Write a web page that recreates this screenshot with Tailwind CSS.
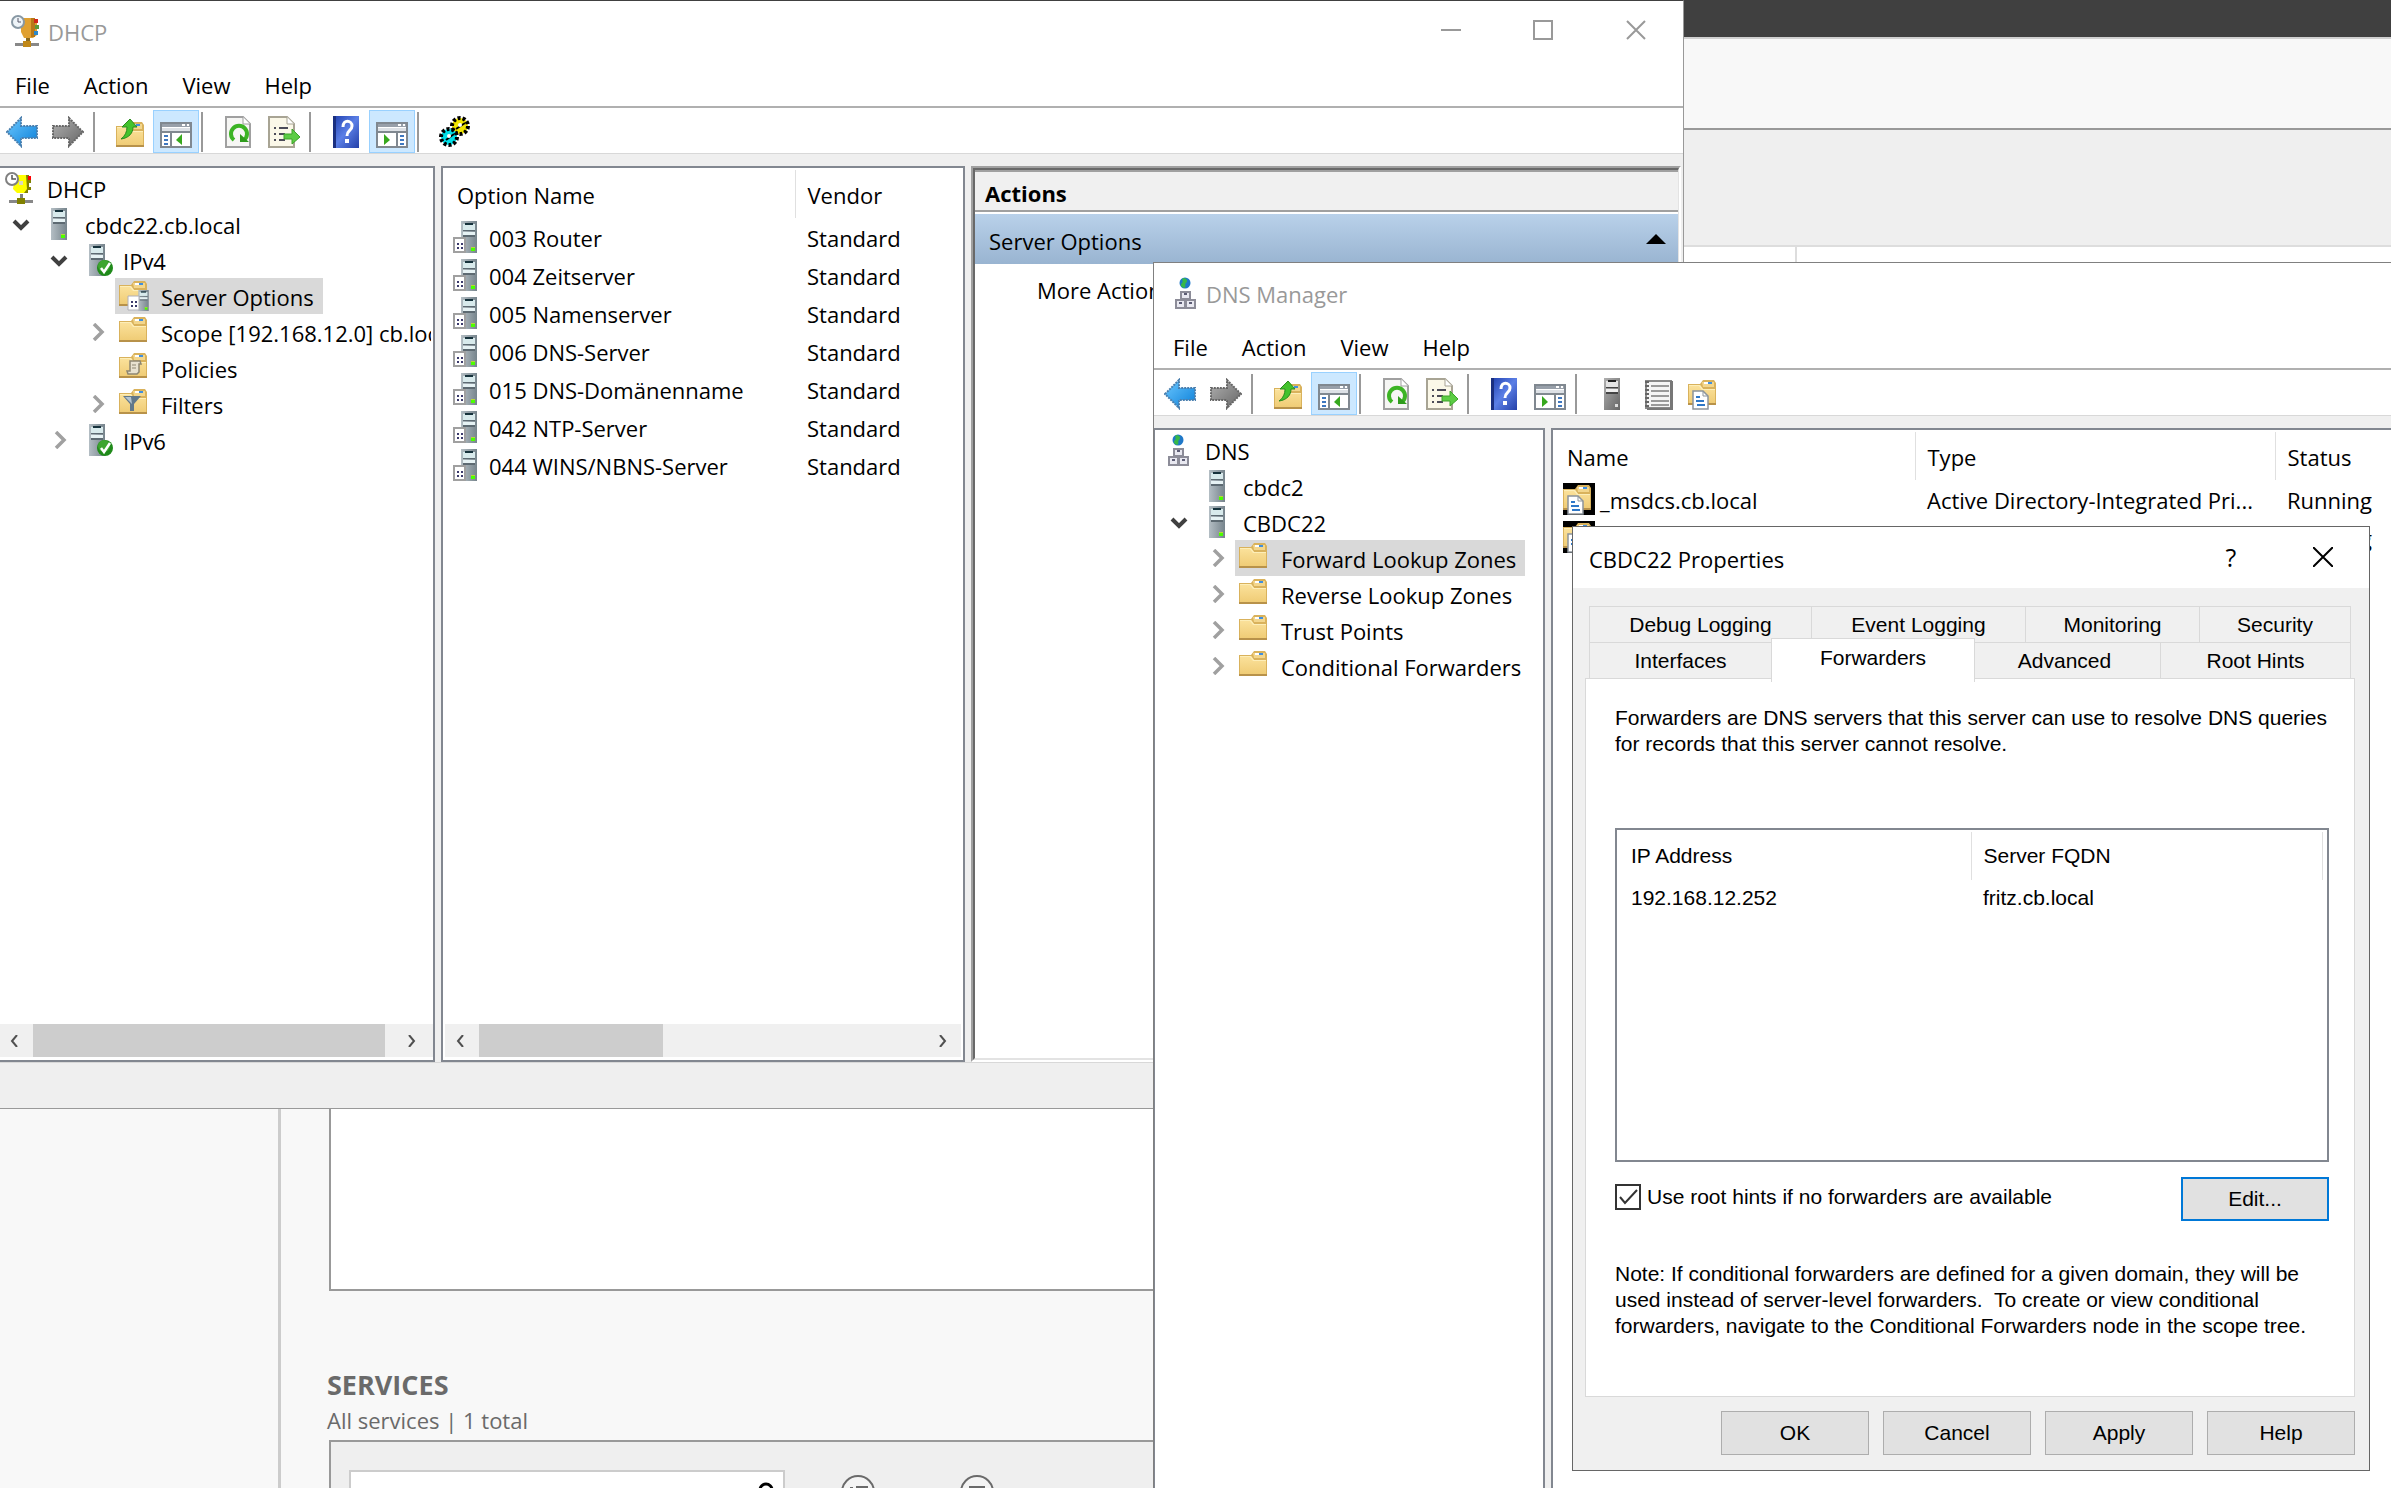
<!DOCTYPE html>
<html lang="en">
<head>
    <meta charset="UTF-8">
    <meta name="viewport" content="width=device-width, initial-scale=1.0">
    <title>DHCP / DNS Manager</title>
    <script src="https://cdn.jsdelivr.net/npm/@tailwindcss/browser@4"></script>
</head>
<body class="bg-[#f8f8f8] font-['Open_Sans','Noto_Sans',sans-serif] text-[22px] leading-9 text-black">

    <!-- Icons -->
    <svg class="absolute size-0" aria-hidden="true">
        <defs>
            <linearGradient id="gBlue" x1="0" y1="0" x2="1" y2="1"><stop offset="0" stop-color="#6cc8ff"/><stop offset="1" stop-color="#0b7fd8"/></linearGradient>
            <linearGradient id="gGray" x1="0" y1="0" x2="1" y2="1"><stop offset="0" stop-color="#b0b0b0"/><stop offset="1" stop-color="#666"/></linearGradient>
            <linearGradient id="gFolder" x1="0" y1="0" x2="0" y2="1"><stop offset="0" stop-color="#fbe29c"/><stop offset="1" stop-color="#efcb74"/></linearGradient>
            <linearGradient id="gServer" x1="0" y1="0" x2="1" y2="0"><stop offset="0" stop-color="#b4bec4"/><stop offset="1" stop-color="#76848c"/></linearGradient>
            <linearGradient id="gHelp" x1="0" y1="0" x2="1" y2="1"><stop offset="0" stop-color="#1f3fae"/><stop offset=".5" stop-color="#5b7fe6"/><stop offset="1" stop-color="#2440a8"/></linearGradient>

            <symbol id="back" viewBox="0 0 32 32"><path d="M1 16 15 2v8h16v12H15v8z" fill="url(#gBlue)" stroke="#4a7fae" stroke-width="2" stroke-dasharray="2 1"/></symbol>
            <symbol id="forward" viewBox="0 0 32 32"><path d="M31 16 17 2v8H1v12h16v8z" fill="url(#gGray)" stroke="#666" stroke-width="2" stroke-dasharray="2 1"/></symbol>
            <symbol id="folder" viewBox="0 0 32 32">
                <path d="M0 5h12l3-4h11l2 3v22H0z" fill="#d9b25c"/>
                <path d="M1 6h11l3 4h12v15H1z" fill="url(#gFolder)"/><path d="M1 6h11l3 4h12v1H14l-3-4H1z" fill="#fdeeb8"/>
                <path d="M14 3h12v5H15z" fill="#f3d68c"/><path d="M16 3h4v2h-4z" fill="#fff"/><path d="M20 3h4v2h-4z" fill="#3f8fe0"/>
                <path d="M0 24h28v2H0z" fill="#b8924a"/>
            </symbol>
            <symbol id="server" viewBox="0 0 32 32">
                <path d="M8 0h16v32H8z" fill="url(#gServer)"/><path d="M10 3h12v6H10z" fill="#d8eaec"/><path d="M12 2h8v2h-8z" fill="#16323c"/>
                <path d="M10 9h12v1H10zM10 14h12v2H10z" fill="#5d6a72"/><path d="M10 11h12v3H10z" fill="#e6f2f4"/>
                <path d="M18 26h4v4h-4z" fill="#4bff00"/><path d="M18 26h4v1h-4z" fill="#b8d838"/>
            </symbol>
            <symbol id="serverGray" viewBox="0 0 32 32">
                <path d="M8 0h16v32H8z" fill="url(#gGray)"/><path d="M10 3h12v6H10z" fill="#e4e4e4"/><path d="M12 2h8v2h-8z" fill="#222"/>
                <path d="M10 9h12v1H10zM10 14h12v2H10z" fill="#444"/><path d="M10 11h12v3H10z" fill="#eee"/><path d="M19 26h3v3h-3z" fill="#ddd"/>
            </symbol>
            <symbol id="serverOk" viewBox="0 0 32 32">
                <use href="#server" width="32" height="32"/><circle cx="24" cy="24" r="8" fill="#1f8a1a"/><circle cx="23" cy="22" r="6" fill="#3da52f"/>
                <path d="m20 24 3 4 6-9" fill="none" stroke="#fff" stroke-width="2.5"/>
            </symbol>
            <symbol id="serverOpt" viewBox="0 0 32 32">
                <use href="#server" x="2" width="32" height="32"/>
                <path d="M3 17h11v14H3z" fill="#fff" stroke="#a0a0a0" stroke-width="2"/>
                <path d="M6 22h2v2H6zM10 22h2v2h-2zM6 26h2v2H6zM10 26h2v2h-2z" fill="#3b3a6c"/>
            </symbol>
            <symbol id="folderOpt" viewBox="0 0 32 32">
                <use href="#folder" width="32" height="32"/><use href="#server" x="14" y="10" width="21" height="21"/>
                <path d="M9 16h11v14H9z" fill="#fff" stroke="#b0b0b8"/><path d="M12 21h2v2h-2zM16 21h2v2h-2zM12 25h2v2h-2zM16 25h2v2h-2z" fill="#3b3a6c"/>
            </symbol>
            <symbol id="folderPolicy" viewBox="0 0 32 32">
                <use href="#folder" width="32" height="32"/>
                <path d="M11 9h10l1 3h-2v8l-2 2H9l-1-3h3z" fill="#e8e2d0" stroke="#8d8672" stroke-width="1.5"/><path d="M13 13h4M13 16h4" stroke="#8d8672"/>
            </symbol>
            <symbol id="folderFilter" viewBox="0 0 32 32">
                <use href="#folder" width="32" height="32"/><path d="M4 8h18l-7 8v7h-4v-7z" fill="#62788a"/><path d="M6 9h6l1 7z" fill="#b4c4d0"/>
            </symbol>
            <symbol id="folderDoc" viewBox="0 0 32 32">
                <use href="#folder" y="1" width="32" height="32"/><path d="M5 13h10l5 5v13H5z" fill="#fff" stroke="#8c949c" stroke-width="1.5"/>
                <path d="M15 13v5h5" fill="none" stroke="#8c949c"/><path d="M8 19h4M8 23h8M9 27h8" stroke="#2f78c8" stroke-width="2"/>
            </symbol>
            <symbol id="zone" viewBox="0 0 32 32"><path d="M0 0h32v32H0z"/><use href="#folderDoc" width="32" height="32"/></symbol>
            <symbol id="up" viewBox="0 0 32 32">
                <use href="#folder" x="2" y="5" width="32" height="32"/>
                <path d="M7 23c4-3 6-7 6-12H8l8-8 7 8h-4c0 6-4 11-12 12z" fill="#43c22c" stroke="#2a8a1c"/>
            </symbol>
            <symbol id="treePane" viewBox="0 0 32 32">
                <path d="M1 7h30v24H1z" fill="#fff" stroke="#808890" stroke-width="2"/><path d="M2 8h28v3H2z" fill="#98a0aa"/><path d="M22 8h3v2h-3zM27 8h2v2h-2z" fill="#fff"/>
                <path d="M2 12h28v4H2z" fill="#dde1e6"/><path d="M11 16v14M2 16h28" stroke="#808890" stroke-width="2"/>
                <path d="M4 20h4M4 24h4M4 28h4" stroke="#3f78c0" stroke-width="2"/><path d="M22 18v11l-6-5z" fill="#37a81e"/>
            </symbol>
            <symbol id="actionPane" viewBox="0 0 32 32">
                <path d="M1 7h30v24H1z" fill="#fff" stroke="#808890" stroke-width="2"/><path d="M2 8h28v3H2z" fill="#98a0aa"/><path d="M22 8h3v2h-3zM27 8h2v2h-2z" fill="#fff"/>
                <path d="M2 12h28v4H2z" fill="#dde1e6"/><path d="M21 16v14M2 16h28" stroke="#808890" stroke-width="2"/>
                <path d="M24 20h4M24 24h4M24 28h4" stroke="#3f78c0" stroke-width="2"/><path d="M8 18v11l6-5z" fill="#37a81e"/>
            </symbol>
            <symbol id="refresh" viewBox="0 0 32 32">
                <path d="M4 1h17l7 7v23H4z" fill="#f6f6f4" stroke="#a0a0a0" stroke-width="2"/><path d="M21 1v7h7" fill="#fff" stroke="#a0a0a0"/>
                <path d="M12 24a8 8 0 1 1 10 0" fill="none" stroke="#3cb424" stroke-width="4"/><path d="M18 18v8h9z" fill="#2f9c1c"/>
            </symbol>
            <symbol id="export" viewBox="0 0 32 32">
                <path d="M1 1h18l7 7v23H1z" fill="#fbf8e8" stroke="#a8a494" stroke-width="2"/><path d="M19 1v7h7" fill="#fff" stroke="#a8a494"/>
                <path d="M6 12h2M6 18h2M6 24h2M11 12h9M11 18h6M11 24h6" stroke="#4c4c58" stroke-width="2"/><path d="M16 18h8v-5l8 8-8 7v-5h-8z" fill="#5ccc44" stroke="#3ca428"/>
            </symbol>
            <symbol id="help" viewBox="0 0 32 32">
                <path d="M3 0h26v32H3z" fill="url(#gHelp)"/><path d="M3 0h3v32H3z" fill="#1a2f80"/>
                <path d="M13 11c0-8 9-7 9-1 0 5-5 4-5 10" fill="none" stroke="#fff" stroke-width="3"/><path d="M15 23h4v4h-4z" fill="#fff"/>
            </symbol>
            <symbol id="gears" viewBox="0 0 32 32">
                <circle cx="22" cy="10" r="8" fill="#f2e600" stroke="#000" stroke-width="4" stroke-dasharray="3 2"/><circle cx="11" cy="21" r="8" fill="#00e0e8" stroke="#000" stroke-width="4" stroke-dasharray="3 2"/>
                <path d="m18 13 9-6M8 24l8-6" stroke="#000" stroke-width="2"/><circle cx="11" cy="20" r="2" fill="#fff"/><circle cx="22" cy="9" r="2" fill="#fff"/>
            </symbol>
            <symbol id="notebook" viewBox="0 0 32 32">
                <path d="M4 3h25v27H4z" fill="#f4f4f4" stroke="#888" stroke-width="2"/><path d="M28 3h3v29H5v-2h23z" fill="#777"/>
                <path d="M9 8h18M9 13h18M9 18h18M9 23h18M9 27h18" stroke="#999" stroke-width="2"/><path d="M5 3v28" stroke="#666" stroke-width="4" stroke-dasharray="2 2"/>
            </symbol>
            <symbol id="dhcpApp" viewBox="0 0 32 32">
                <path d="M10 3h13l3 3v14l-4 3H13l-3-6z" fill="#e0a030"/><path d="M20 3h4v19h-4z" fill="#b87818"/><path d="M23 4h4v4h-4z" fill="#d02818"/><path d="M24 10h4v4h-4z" fill="#5a9a3c"/><path d="M23 16h4v4h-4z" fill="#2f88c8"/>
                <circle cx="7" cy="7" r="6" fill="#eef4f8" stroke="#8898a4" stroke-width="2"/><path d="M7 3v4h3" fill="none" stroke="#556"/>
                <path d="M15 23h4v4h-4z" fill="#8a6a20"/><path d="M4 28h24v3H4z" fill="#888"/><path d="M12 26h8v6h-8z" fill="#c08818"/>
            </symbol>
            <symbol id="dhcpRoot" viewBox="0 0 32 32">
                <path d="M10 3h11l3 3v11l-3 4H12l-4-4z" fill="#ffff00"/><path d="M21 3h3v4h2v4h-2v4h2v3h-3v3h-4l3-4z" fill="#808000"/><path d="M23 4h3v4h-3z" fill="#f00"/>
                <path d="M14 9h4v4h-4z" fill="#d8d8c0"/><circle cx="7" cy="7" r="6" fill="#fff" stroke="#808080" stroke-width="2"/><path d="M7 3v4h4" fill="none" stroke="#555" stroke-width="1.5"/>
                <path d="M15 22h3v5h-3z" fill="#808080"/><path d="M4 28h24v3H4z" fill="#888"/><path d="M12 26h8v6h-8z" fill="#808000"/>
            </symbol>
            <symbol id="dnsApp" viewBox="0 0 32 32">
                <circle cx="15" cy="6" r="5.5" fill="#1f78c8"/><path d="M13 1c4 0 5 3 3 5s1 4-2 5c-3-1-4-3-2-5s-1-3 1-5z" fill="#38b848"/>
                <path d="M11 15h9v7h-9zM6 23h9v8H6zM16 23h9v8h-9z" fill="#e8e8f0" stroke="#8c8c98" stroke-width="2"/>
                <path d="M14 17h3M9 26h3M19 26h3" stroke="#5c5c74" stroke-width="2"/>
            </symbol>
            <symbol id="open" viewBox="0 0 18 18"><path d="m2 6 7 7 7-7" fill="none" stroke="#404040" stroke-width="4"/></symbol>
            <symbol id="closed" viewBox="0 0 18 18"><path d="m6 1 8 8-8 8" fill="none" stroke="#a0a0a0" stroke-width="3.5"/></symbol>
            <symbol id="left" viewBox="0 0 12 12"><path d="M9 0 4 6l5 6" fill="none" stroke="#505050" stroke-width="2"/></symbol>
            <symbol id="right" viewBox="0 0 12 12"><path d="m3 0 5 6-5 6" fill="none" stroke="#505050" stroke-width="2"/></symbol>
        </defs>
    </svg>

    <div class="relative flex h-screen flex-col overflow-hidden">

        <!-- Server Manager -->
        <div class="h-[39px] shrink-0 border-b-2 border-[#d0d0d0] bg-[#404040]"></div>
        <div class="h-[91px] shrink-0 border-b-2 border-[#999]"></div>
        <div class="h-[117px] shrink-0 border-b-2 border-[#ddd] bg-[#efefef]"></div>
        <div class="flex min-h-0 flex-1">
            <aside class="w-[281px] shrink-0 border-r-3 border-[#ccc]"></aside>
            <main class="min-w-0 flex-1 pl-12 text-[#6a6a6a]">
                <div class="h-[1044px] border-b-2 border-l-2 border-[#999] bg-white">
                    <div class="h-5 w-[1466px] border-r-2 border-[#ddd]"></div>
                </div>
                <h2 class="mt-[76px] -ml-0.5 text-[27px] leading-9 font-bold">SERVICES</h2>
                <p class="-ml-0.5 leading-[34px]">All services | 1 total</p>
                <div class="mt-[3px] flex h-40 items-start gap-[55px] border-t-2 border-l-2 border-[#999] bg-[#efefef] pt-7 pl-[18px]">
                    <label class="flex h-16 w-[436px] items-start justify-between border-2 border-[#ccc] bg-white px-2 pt-1.5">
                        <input type="text" placeholder="Filter" aria-label="Filter" class="w-80 placeholder:text-[#6a6a6a]">
                        <svg class="mt-1 size-5" viewBox="0 0 20 20"><circle cx="11" cy="8" r="6" fill="none" stroke="#000" stroke-width="3"/><path d="m7 12-6 7" stroke="#000" stroke-width="3"/></svg>
                    </label>
                    <div class="flex gap-[83px] pt-1">
                        <button aria-label="Saved queries"><svg class="size-9" viewBox="0 0 36 36"><circle cx="18" cy="18" r="16" fill="#f4f4f4" stroke="#6a6a6a" stroke-width="2"/><path d="M10 13h3v3h-3zM16 12h12v4H16zM10 20h3v3h-3zM16 20h12v3H16z" fill="#6a6a6a"/></svg></button>
                        <button aria-label="Save query"><svg class="size-9" viewBox="0 0 36 36"><circle cx="18" cy="18" r="16" fill="#f4f4f4" stroke="#6a6a6a" stroke-width="2"/><path d="M10 12h16v13H10z" fill="#6a6a6a"/><path d="M13 17h10v5H13z" fill="#fff"/></svg></button>
                    </div>
                </div>
            </main>
        </div>

        <!-- DHCP window -->
        <section class="absolute top-0 left-0 flex h-[1109px] w-[1684px] flex-col overflow-hidden border-t border-r border-b border-t-[#404040] border-r-[#999] border-b-[#999] bg-white">
            <header class="flex h-[59px] shrink-0 items-center pl-[11px] text-[#999]">
                <svg class="size-8"><use href="#dhcpApp"/></svg>
                <h1 class="ml-[5px] flex-1 pt-0.5">DHCP</h1>
                <div class="flex self-start">
                    <button aria-label="Minimize" class="grid h-[58px] w-[92px] place-items-center"><svg class="size-5" viewBox="0 0 20 20"><path d="M0 10h20" stroke="#999" stroke-width="2"/></svg></button>
                    <button aria-label="Maximize" class="grid h-[58px] w-[92px] place-items-center"><svg class="size-5" viewBox="0 0 20 20"><path d="M1 1h18v18H1z" fill="none" stroke="#999" stroke-width="2"/></svg></button>
                    <button aria-label="Close" class="grid h-[58px] w-[94px] place-items-center"><svg class="size-5" viewBox="0 0 20 20"><path d="m1 1 18 18M19 1 1 19" stroke="#999" stroke-width="2"/></svg></button>
                </div>
            </header>
            <nav class="flex h-12 shrink-0 items-center gap-[34px] border-b-2 border-[#b0b0b0] pt-1 pl-[15px]">
                <button>File</button><button>Action</button><button>View</button><button>Help</button>
            </nav>
            <div class="-ml-px flex h-[46px] shrink-0 items-start gap-4 border-b border-[#d8d8d8] pt-0.5">
                <div class="flex">
                    <button aria-label="Back" class="grid h-[43px] w-[46px] place-items-center"><svg class="size-8"><use href="#back"/></svg></button>
                    <button aria-label="Forward" class="grid h-[43px] w-[46px] place-items-center"><svg class="size-8"><use href="#forward"/></svg></button>
                </div>
                <div class="flex before:-ml-[14px] before:mr-3 before:mt-0.5 before:h-10 before:w-0.5 before:bg-[#999]">
                    <button aria-label="Up" class="grid h-[43px] w-[46px] place-items-center"><svg class="size-8"><use href="#up"/></svg></button>
                    <button aria-label="Show console tree" class="grid h-[43px] w-[46px] place-items-center border border-[#99d1ff] bg-[#cce8ff]"><svg class="size-8"><use href="#treePane"/></svg></button>
                </div>
                <div class="flex before:-ml-[14px] before:mr-3 before:mt-0.5 before:h-10 before:w-0.5 before:bg-[#999]">
                    <button aria-label="Refresh" class="grid h-[43px] w-[46px] place-items-center"><svg class="size-8"><use href="#refresh"/></svg></button>
                    <button aria-label="Export list" class="grid h-[43px] w-[46px] place-items-center"><svg class="size-8"><use href="#export"/></svg></button>
                </div>
                <div class="flex before:-ml-[14px] before:mr-3 before:mt-0.5 before:h-10 before:w-0.5 before:bg-[#999]">
                    <button aria-label="Help" class="grid h-[43px] w-[46px] place-items-center"><svg class="size-8"><use href="#help"/></svg></button>
                    <button aria-label="Show action pane" class="grid h-[43px] w-[46px] place-items-center border border-[#99d1ff] bg-[#cce8ff]"><svg class="size-8"><use href="#actionPane"/></svg></button>
                </div>
                <div class="flex before:-ml-[14px] before:mr-3 before:mt-0.5 before:h-10 before:w-0.5 before:bg-[#999]">
                    <button aria-label="Configure options" class="grid h-[43px] w-[46px] place-items-center"><svg class="size-8"><use href="#gears"/></svg></button>
                </div>
            </div>

            <div class="flex min-h-0 flex-1 gap-1.5 bg-[#efefef] pt-3">
                <!-- Console tree -->
                <div class="flex w-[435px] shrink-0 flex-col overflow-hidden border-y-2 border-r-2 border-[#828790] bg-white pt-0.5 pb-0.5">
                    <ul class="flex-1 whitespace-nowrap">
                        <li class="flex h-9 items-center pl-[5px]"><svg class="mr-2.5 size-8 shrink-0"><use href="#dhcpRoot"/></svg><span class="pt-0.5">DHCP</span></li>
                        <li class="flex h-9 items-center pl-3"><svg class="mr-[13px] size-[18px] shrink-0"><use href="#open"/></svg><svg class="mr-2.5 size-8 shrink-0"><use href="#server"/></svg><span class="pt-0.5">cbdc22.cb.local</span></li>
                        <li class="flex h-9 items-center pl-[50px]"><svg class="mr-[13px] size-[18px] shrink-0"><use href="#open"/></svg><svg class="mr-2.5 size-8 shrink-0"><use href="#serverOk"/></svg><span class="pt-0.5">IPv4</span></li>
                        <li class="flex h-9 pl-[115px]"><div class="flex items-center bg-[#d9d9d9] pr-[9px] pl-1"><svg class="mr-2.5 size-8 shrink-0"><use href="#folderOpt"/></svg><span class="pt-0.5">Server Options</span></div></li>
                        <li class="flex h-9 items-center pl-[88px]"><svg class="mr-[13px] size-[18px] shrink-0"><use href="#closed"/></svg><svg class="mr-2.5 size-8 shrink-0"><use href="#folder"/></svg><span class="mr-0.5 overflow-hidden pt-0.5">Scope [192.168.12.0] cb.local</span></li>
                        <li class="flex h-9 items-center pl-[119px]"><svg class="mr-2.5 size-8 shrink-0"><use href="#folderPolicy"/></svg><span class="pt-0.5">Policies</span></li>
                        <li class="flex h-9 items-center pl-[88px]"><svg class="mr-[13px] size-[18px] shrink-0"><use href="#closed"/></svg><svg class="mr-2.5 size-8 shrink-0"><use href="#folderFilter"/></svg><span class="pt-0.5">Filters</span></li>
                        <li class="flex h-9 items-center pl-[50px]"><svg class="mr-[13px] size-[18px] shrink-0"><use href="#closed"/></svg><svg class="mr-2.5 size-8 shrink-0"><use href="#serverOk"/></svg><span class="pt-0.5">IPv6</span></li>
                    </ul>
                    <div class="mb-px flex h-[33px] items-center bg-[#f0f0f0] pr-[15px] pl-2">
                        <svg class="mr-[13px] size-3"><use href="#left"/></svg>
                        <div class="h-full w-[352px] bg-[#cdcdcd]"></div>
                        <svg class="ml-auto size-3"><use href="#right"/></svg>
                    </div>
                </div>

                <!-- Options list -->
                <div class="flex w-[524px] shrink-0 flex-col border-2 border-[#828790] bg-white p-0.5">
                    <div class="flex-1">
                        <table class="w-full table-fixed text-left">
                            <thead>
                                <tr class="h-12">
                                    <th class="w-[350px] border-r border-[#e0e0e0] pt-0.5 pl-3 font-normal">Option Name</th>
                                    <th class="pt-0.5 pl-3 font-normal">Vendor</th>
                                </tr>
                            </thead>
                            <tbody id="optionRows"></tbody>
                        </table>
                    </div>
                    <div class="mb-px flex h-[33px] items-center bg-[#f0f0f0] pr-3 pl-[9px]">
                        <svg class="mr-[13px] size-3"><use href="#left"/></svg>
                        <div class="h-full w-[184px] bg-[#cdcdcd]"></div>
                        <svg class="ml-auto size-3"><use href="#right"/></svg>
                    </div>
                </div>

                <!-- Actions pane -->
                <div class="mr-0.5 min-w-0 flex-1 border-2 border-t-[#a0a0a0] border-r-white border-b-white border-l-[#a0a0a0]">
                    <div class="flex h-full flex-col border-2 border-r border-t-[#696969] border-r-[#e3e3e3] border-b-[#e3e3e3] border-l-[#696969] bg-white">
                        <h2 class="flex h-[42px] items-center border-y-2 border-[#a0a0a0] bg-[#f0f0f0] pt-1 pl-2.5 font-bold">Actions</h2>
                        <div class="mt-0.5 flex h-[50px] items-center justify-between bg-linear-to-b from-[#b9d1ea] to-[#99b4d1] pr-3 pl-[14px]">
                            <span class="pt-1">Server Options</span>
                            <svg class="size-5" viewBox="0 0 20 20"><path d="m10 5 10 10H0z"/></svg>
                        </div>
                        <a href="#" class="pt-2 pl-[62px]">More Actions</a>
                    </div>
                </div>
            </div>
            <footer class="h-[46px] shrink-0 border-t border-[#d8d8d8] bg-[#efefef]"></footer>
        </section>

        <!-- DNS Manager window -->
        <section class="absolute top-[262px] right-0 -bottom-10 left-[1153px] flex flex-col overflow-hidden border-t border-l border-[#808080] bg-white">
            <header class="flex h-[59px] shrink-0 items-center pl-4 text-[#999]">
                <svg class="size-8"><use href="#dnsApp"/></svg>
                <h1 class="ml-1 flex-1 pt-0.5">DNS Manager</h1>
            </header>
            <nav class="flex h-12 shrink-0 items-center gap-[34px] border-b-2 border-[#b0b0b0] pt-1 pl-[19px]">
                <button>File</button><button>Action</button><button>View</button><button>Help</button>
            </nav>
            <div class="flex h-[46px] shrink-0 items-start gap-4 border-b border-[#d8d8d8] pt-0.5 pl-[3px]">
                <div class="flex">
                    <button aria-label="Back" class="grid h-[43px] w-[46px] place-items-center"><svg class="size-8"><use href="#back"/></svg></button>
                    <button aria-label="Forward" class="grid h-[43px] w-[46px] place-items-center"><svg class="size-8"><use href="#forward"/></svg></button>
                </div>
                <div class="flex before:-ml-[14px] before:mr-3 before:mt-0.5 before:h-10 before:w-0.5 before:bg-[#999]">
                    <button aria-label="Up" class="grid h-[43px] w-[46px] place-items-center"><svg class="size-8"><use href="#up"/></svg></button>
                    <button aria-label="Show console tree" class="grid h-[43px] w-[46px] place-items-center border border-[#99d1ff] bg-[#cce8ff]"><svg class="size-8"><use href="#treePane"/></svg></button>
                </div>
                <div class="flex before:-ml-[14px] before:mr-3 before:mt-0.5 before:h-10 before:w-0.5 before:bg-[#999]">
                    <button aria-label="Refresh" class="grid h-[43px] w-[46px] place-items-center"><svg class="size-8"><use href="#refresh"/></svg></button>
                    <button aria-label="Export list" class="grid h-[43px] w-[46px] place-items-center"><svg class="size-8"><use href="#export"/></svg></button>
                </div>
                <div class="flex before:-ml-[14px] before:mr-3 before:mt-0.5 before:h-10 before:w-0.5 before:bg-[#999]">
                    <button aria-label="Help" class="grid h-[43px] w-[46px] place-items-center"><svg class="size-8"><use href="#help"/></svg></button>
                    <button aria-label="Show action pane" class="grid h-[43px] w-[46px] place-items-center"><svg class="size-8"><use href="#actionPane"/></svg></button>
                </div>
                <div class="flex before:-ml-[14px] before:mr-3 before:mt-0.5 before:h-10 before:w-0.5 before:bg-[#999]">
                    <button aria-label="New server" class="grid h-[43px] w-[46px] place-items-center"><svg class="size-8"><use href="#serverGray"/></svg></button>
                    <button aria-label="Records" class="grid h-[43px] w-[46px] place-items-center"><svg class="size-8"><use href="#notebook"/></svg></button>
                    <button aria-label="New zone" class="grid h-[43px] w-[46px] place-items-center"><svg class="size-8"><use href="#folderDoc"/></svg></button>
                </div>
            </div>

            <div class="flex min-h-0 flex-1 gap-1.5 bg-[#efefef] pt-3">
                <ul class="w-[391px] shrink-0 border-2 border-l border-[#828790] bg-white pt-0.5 pl-[3px] whitespace-nowrap">
                    <li class="flex h-9 items-center pl-[5px]"><svg class="mr-2.5 size-8 shrink-0"><use href="#dnsApp"/></svg><span class="pt-0.5">DNS</span></li>
                    <li class="flex h-9 items-center pl-[43px]"><svg class="mr-2.5 size-8 shrink-0"><use href="#server"/></svg><span class="pt-0.5">cbdc2</span></li>
                    <li class="flex h-9 items-center pl-3"><svg class="mr-[13px] size-[18px] shrink-0"><use href="#open"/></svg><svg class="mr-2.5 size-8 shrink-0"><use href="#server"/></svg><span class="pt-0.5">CBDC22</span></li>
                    <li class="flex h-9 items-center pl-[50px]"><svg class="mr-[9px] size-[18px] shrink-0"><use href="#closed"/></svg><div class="flex h-9 items-center bg-[#d9d9d9] pr-[9px] pl-1"><svg class="mr-2.5 size-8 shrink-0"><use href="#folder"/></svg><span class="pt-0.5">Forward Lookup Zones</span></div></li>
                    <li class="flex h-9 items-center pl-[50px]"><svg class="mr-[13px] size-[18px] shrink-0"><use href="#closed"/></svg><svg class="mr-2.5 size-8 shrink-0"><use href="#folder"/></svg><span class="pt-0.5">Reverse Lookup Zones</span></li>
                    <li class="flex h-9 items-center pl-[50px]"><svg class="mr-[13px] size-[18px] shrink-0"><use href="#closed"/></svg><svg class="mr-2.5 size-8 shrink-0"><use href="#folder"/></svg><span class="pt-0.5">Trust Points</span></li>
                    <li class="flex h-9 items-center pl-[50px]"><svg class="mr-[13px] size-[18px] shrink-0"><use href="#closed"/></svg><svg class="mr-2.5 size-8 shrink-0"><use href="#folder"/></svg><span class="pt-0.5">Conditional Forwarders</span></li>
                </ul>
                <div class="min-w-0 flex-1 border-t-2 border-l-2 border-[#828790] bg-white pt-0.5">
                    <table class="w-full table-fixed text-left whitespace-nowrap">
                        <thead>
                            <tr class="h-12">
                                <th class="w-[362px] border-r border-[#e0e0e0] pt-0.5 pl-[14px] font-normal">Name</th>
                                <th class="w-[360px] border-r border-[#e0e0e0] pt-0.5 pl-3 font-normal">Type</th>
                                <th class="pt-0.5 pl-3 font-normal">Status</th>
                            </tr>
                        </thead>
                        <tbody>
                            <tr class="h-[38px]">
                                <td><div class="flex items-center gap-[5px] pl-2.5"><svg class="size-8"><use href="#zone"/></svg><span class="pt-0.5">_msdcs.cb.local</span></div></td>
                                <td class="pt-0.5 pl-3">Active Directory-Integrated Pri...</td>
                                <td class="pt-0.5 pl-3">Running</td>
                            </tr>
                            <tr class="h-[38px]">
                                <td><svg class="ml-2.5 size-8"><use href="#zone"/></svg></td>
                                <td></td>
                                <td class="pt-0.5 pl-3">Running</td>
                            </tr>
                        </tbody>
                    </table>
                </div>
            </div>
        </section>

        <!-- Server properties dialog -->
        <section role="dialog" aria-labelledby="dialogTitle" class="absolute top-[526px] left-[1572px] flex w-[798px] flex-col border border-[#666] bg-[#f0f0f0]">
            <header class="flex h-[61px] items-center bg-white pl-4">
                <h1 id="dialogTitle" class="flex-1 pt-0.5">CBDC22 Properties</h1>
                <button aria-label="Help" class="grid h-[59px] w-[92px] place-items-center self-start text-[25px]">?</button>
                <button aria-label="Close" class="grid h-[59px] w-[92px] place-items-center self-start"><svg class="size-5" viewBox="0 0 20 20"><path d="m0 0 20 20M20 0 0 20" stroke="#000" stroke-width="2"/></svg></button>
            </header>

            <div class="flex flex-col pt-[18px] pr-3.5 pl-3 font-['Liberation_Sans',Arial,sans-serif] text-[21px] leading-[26px]">
                <div role="tablist" class="px-1">
                    <div class="flex h-9 border-t border-l border-[#d9d9d9]">
                        <button role="tab" class="w-[222px] border-r border-[#d9d9d9]">Debug Logging</button>
                        <button role="tab" class="w-[214px] border-r border-[#d9d9d9]">Event Logging</button>
                        <button role="tab" class="w-[174px] border-r border-[#d9d9d9]">Monitoring</button>
                        <button role="tab" class="flex-1 border-r border-[#d9d9d9]">Security</button>
                    </div>
                    <div class="flex h-9 border-t border-l border-[#d9d9d9]">
                        <button role="tab" class="w-[181px]">Interfaces</button>
                        <button role="tab" aria-selected="true" class="z-10 -mt-[5px] -mb-1 w-[204px] border-x border-t border-[#d9d9d9] bg-white pb-1.5">Forwarders</button>
                        <button role="tab" class="w-[186px] border-r border-[#d9d9d9] pr-1.5">Advanced</button>
                        <button role="tab" class="flex-1 border-r border-[#d9d9d9]">Root Hints</button>
                    </div>
                </div>

                <div class="h-[719px] border border-[#d9d9d9] bg-white pt-[26px] pr-[25px] pl-[29px]">
                    <p class="whitespace-nowrap">Forwarders are DNS servers that this server can use to resolve DNS queries<br>for records that this server cannot resolve.</p>

                    <div class="mt-[71px] h-[334px] border-2 border-[#828790] p-0.5">
                        <table class="w-full table-fixed text-left">
                            <thead>
                                <tr class="h-12">
                                    <th class="w-[352px] border-r border-[#e0e0e0] pl-3 font-normal">IP Address</th>
                                    <th class="border-r border-[#e0e0e0] pl-3 font-normal">Server FQDN</th>
                                    <th class="w-[3px]"></th>
                                </tr>
                            </thead>
                            <tbody>
                                <tr class="h-9">
                                    <td class="pl-3">192.168.12.252</td>
                                    <td class="pl-3">fritz.cb.local</td>
                                    <td></td>
                                </tr>
                            </tbody>
                        </table>
                    </div>

                    <div class="mt-[15px] flex items-start justify-between">
                        <label class="mt-[7px] flex items-center gap-1.5 whitespace-nowrap">
                            <span class="relative size-[26px]">
                                <input type="checkbox" checked class="block size-[26px] appearance-none border-2 border-[#333] bg-white">
                                <svg class="pointer-events-none absolute inset-0 size-[26px]" viewBox="0 0 26 26"><path d="m5 13 5 6L22 6" fill="none" stroke="#333" stroke-width="2"/></svg>
                            </span>
                            Use root hints if no forwarders are available
                        </label>
                        <button class="h-11 w-[148px] border-2 border-[#0078d7] bg-[#e1e1e1]">Edit...</button>
                    </div>

                    <p class="mt-10 whitespace-pre">Note: If conditional forwarders are defined for a given domain, they will be
used instead of server-level forwarders.  To create or view conditional
forwarders, navigate to the Conditional Forwarders node in the scope tree.</p>
                </div>

                <div class="flex justify-end gap-3.5 pt-3.5 pb-[15px]">
                    <button class="h-11 w-[148px] border border-[#adadad] bg-[#e1e1e1]">OK</button>
                    <button class="h-11 w-[148px] border border-[#adadad] bg-[#e1e1e1]">Cancel</button>
                    <button class="h-11 w-[148px] border border-[#adadad] bg-[#e1e1e1]">Apply</button>
                    <button class="h-11 w-[148px] border border-[#adadad] bg-[#e1e1e1]">Help</button>
                </div>
            </div>
        </section>
    </div>

    <script>
        const options = [
            "003 Router",
            "004 Zeitserver",
            "005 Namenserver",
            "006 DNS-Server",
            "015 DNS-Domänenname",
            "042 NTP-Server",
            "044 WINS/NBNS-Server",
        ];

        document.getElementById("optionRows").innerHTML = options.map(name => `
            <tr class="h-[38px]">
                <td><div class="flex items-center gap-1.5 pl-1.5"><svg class="size-8"><use href="#serverOpt"/></svg><span class="pt-0.5">${name}</span></div></td>
                <td class="pt-0.5 pl-3">Standard</td>
            </tr>`).join("");
    </script>
</body>
</html>
